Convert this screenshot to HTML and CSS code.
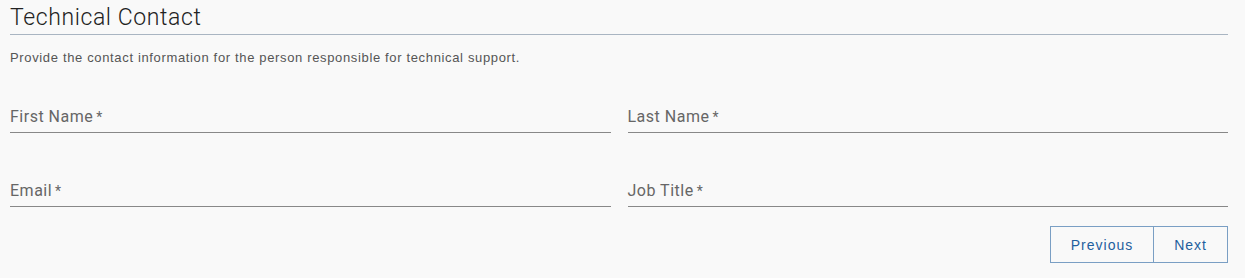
FILE: index.html
```html
<!DOCTYPE html>
<html lang="en">
<head>
  <meta charset="UTF-8">
  <title>Technical Contact</title>
  <link rel="stylesheet" href="styles.css">
</head>
<body>
  <div id="form-container">
    <h2 class="section-title">Technical Contact</h2>
    <p class="section-hint">Provide the contact information for the person responsible for technical support.</p>

    <div class="field-row">
      <label class="field">
        <span class="field-label">First Name<span class="req">*</span></span>
      </label>
      <label class="field">
        <span class="field-label">Last Name<span class="req">*</span></span>
      </label>
    </div>

    <div class="field-row">
      <label class="field">
        <span class="field-label">Email<span class="req">*</span></span>
      </label>
      <label class="field">
        <span class="field-label">Job Title<span class="req">*</span></span>
      </label>
    </div>

    <div class="nav-buttons">
      <button class="nav-btn">Previous</button>
      <button class="nav-btn">Next</button>
    </div>
  </div>
</body>
</html>
```

FILE: styles.css
```css
body {
  margin: 0;
  background: #f9f9f9;
  font-family: 'Liberation Sans', Arial, sans-serif;
}
#form-container {
  padding: 4px 17px 0 10px;
}
.section-title {
  margin: 0;
  font-family: Roboto, sans-serif;
  font-weight: 300;
  font-size: 23px;
  letter-spacing: 0.6px;
  line-height: 28px;
  color: #222;
  padding-bottom: 2px;
  border-bottom: 1px solid #a9b5c2;
}
.section-hint {
  margin: 15px 0 0;
  font-size: 13px;
  letter-spacing: 0.65px;
  line-height: 16px;
  color: #555;
}
.field-row {
  display: grid;
  grid-template-columns: 1fr 1fr;
  column-gap: 17px;
  margin-top: 41px;
}
.field-row + .field-row {
  margin-top: 48px;
}
.field {
  display: block;
  border-bottom: 1px solid #888;
  padding-bottom: 5px;
}
.field-label {
  font-family: Roboto, sans-serif;
  font-size: 16px;
  letter-spacing: 0.5px;
  line-height: 19px;
  color: #666;
}
.req {
  margin-left: 3px;
  font-size: 14px;
}
.nav-buttons {
  display: flex;
  justify-content: flex-end;
  margin-top: 19px;
}
.nav-btn {
  background: transparent;
  border: 1px solid #7a9fc4;
  color: #1f5f9e;
  font-family: 'Liberation Sans', Arial, sans-serif;
  font-size: 14px;
  letter-spacing: 1px;
  height: 37px;
  padding: 0 20px;
  cursor: pointer;
}
.nav-btn + .nav-btn {
  border-left: none;
}
```
